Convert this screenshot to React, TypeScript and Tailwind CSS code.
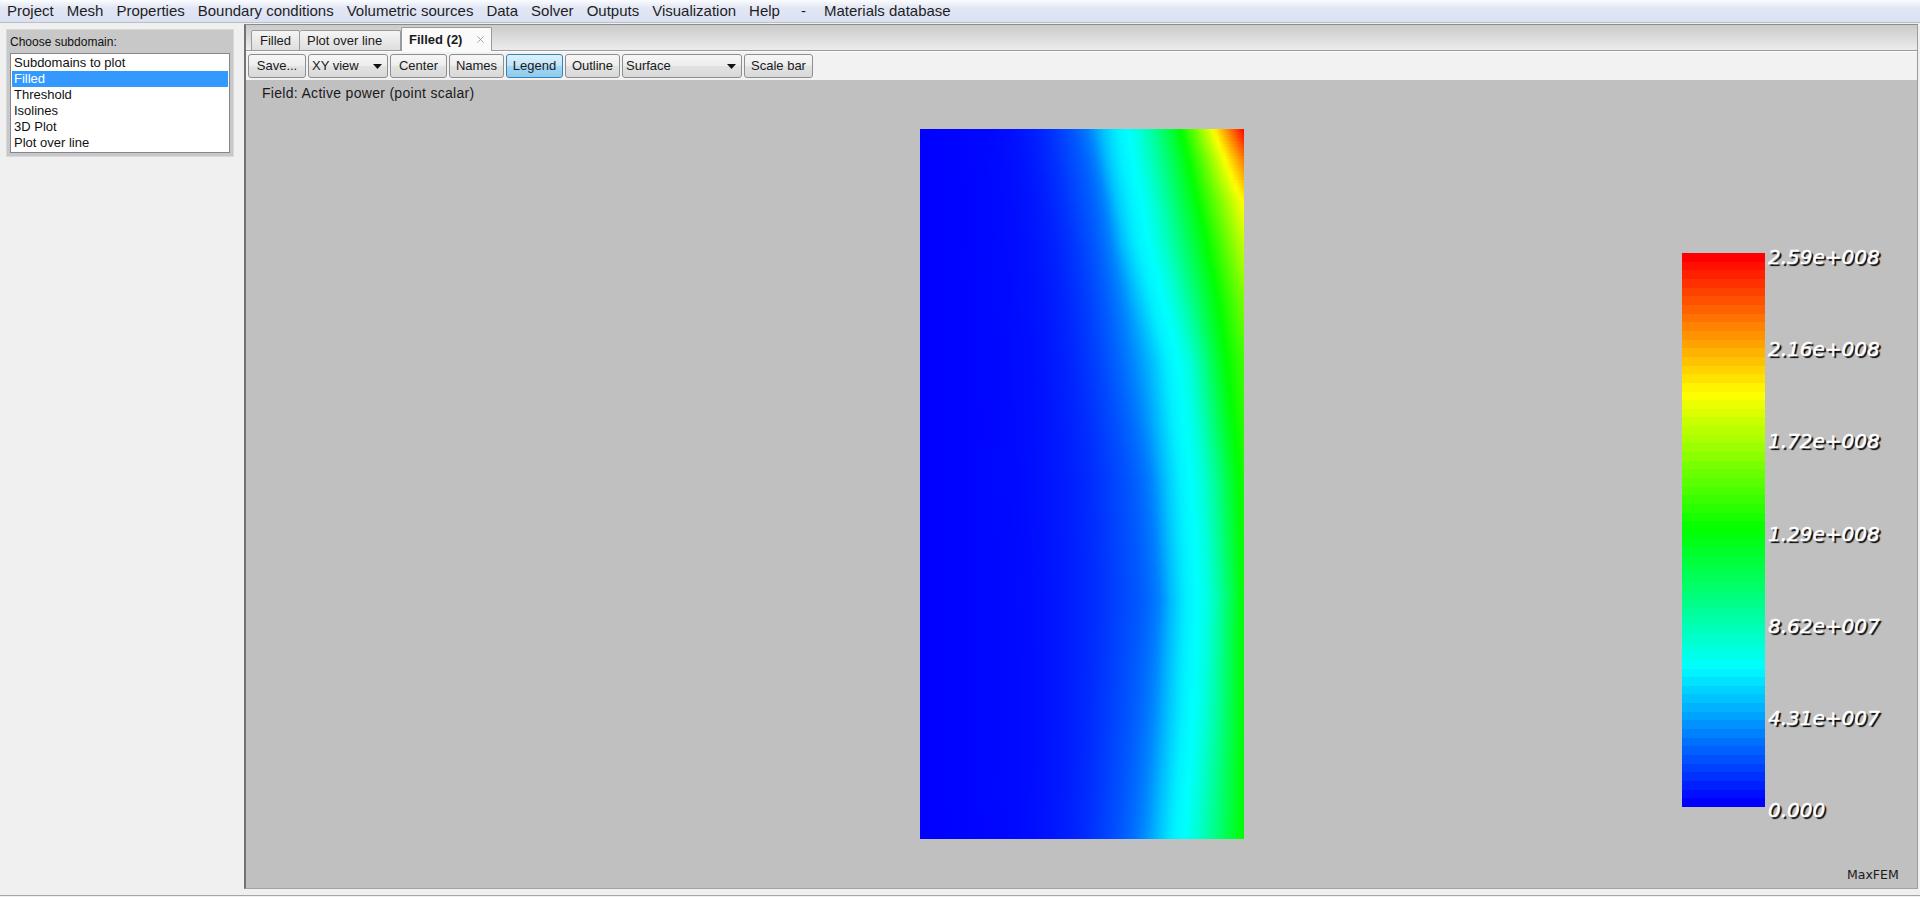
import React from 'react';
import { X } from 'lucide-react';

// field rows: y, b3 (f=.02), b2 (f=.0625), b (f=.125), c (f=.25), g (f=.5), edge value
const FIELD_TABLE: number[][] = [
  [129, 1020, 1060, 1088, 1127, 1180, 1.0],
  [160, 1025, 1065, 1095, 1132, 1188, 0.88],
  [200, 1030, 1072, 1103, 1140, 1197, 0.76],
  [245, 1035, 1080, 1110, 1148, 1207, 0.69],
  [300, 1040, 1088, 1120, 1162, 1218, 0.62],
  [360, 1045, 1095, 1130, 1177, 1227, 0.56],
  [480, 1050, 1110, 1150, 1190, 1240, 0.52],
  [600, 1052, 1115, 1158, 1197, 1243, 0.51],
  [720, 1052, 1110, 1150, 1192, 1244, 0.5],
  [840, 1050, 1103, 1140, 1183, 1244, 0.5],
];

const FX0 = 920;
const FW = 324;
const FH = 710;
const ROW_H = 3;

const rgb = (r: number, g: number, b: number) => `rgb(${Math.round(r)},${Math.round(g)},${Math.round(b)})`;

// rainbow lut, blue -> red
const cmap = (v: number) => {
  const f = Math.max(0, Math.min(1, v));
  if (f < 0.25) return rgb(0, (f / 0.25) * 255, 255);
  if (f < 0.5) return rgb(0, 255, ((0.5 - f) / 0.25) * 255);
  if (f < 0.75) return rgb(((f - 0.5) / 0.25) * 255, 255, 0);
  return rgb(255, ((1 - f) / 0.25) * 255, 0);
};

const interpRow = (y: number) => {
  if (y <= FIELD_TABLE[0][0]) return FIELD_TABLE[0];
  for (let i = 0; i < FIELD_TABLE.length - 1; i++) {
    const a = FIELD_TABLE[i];
    const b = FIELD_TABLE[i + 1];
    if (y >= a[0] && y <= b[0]) {
      const t = (y - a[0]) / (b[0] - a[0]);
      return a.map((v, k) => v + (b[k] - v) * t);
    }
  }
  return FIELD_TABLE[FIELD_TABLE.length - 1];
};

// monotone cubic (Fritsch-Carlson) through the knots, so bands blend smoothly
const monotone = (xs: number[], ys: number[]) => {
  const n = xs.length;
  const d: number[] = [];
  for (let i = 0; i < n - 1; i++) d.push((ys[i + 1] - ys[i]) / (xs[i + 1] - xs[i]));
  const m: number[] = [d[0]];
  for (let i = 1; i < n - 1; i++) m.push(d[i - 1] * d[i] <= 0 ? 0 : (d[i - 1] + d[i]) / 2);
  m.push(d[n - 2]);
  for (let i = 0; i < n - 1; i++) {
    if (d[i] === 0) {
      m[i] = 0;
      m[i + 1] = 0;
      continue;
    }
    const a = m[i] / d[i];
    const b = m[i + 1] / d[i];
    const s = a * a + b * b;
    if (s > 9) {
      const t = 3 / Math.sqrt(s);
      m[i] = t * a * d[i];
      m[i + 1] = t * b * d[i];
    }
  }
  return (x: number) => {
    let i = 0;
    while (i < n - 2 && x > xs[i + 1]) i++;
    const h = xs[i + 1] - xs[i];
    const t = Math.max(0, Math.min(1, (x - xs[i]) / h));
    const t2 = t * t;
    const t3 = t2 * t;
    return (
      (2 * t3 - 3 * t2 + 1) * ys[i] +
      (t3 - 2 * t2 + t) * h * m[i] +
      (-2 * t3 + 3 * t2) * ys[i + 1] +
      (t3 - t2) * h * m[i + 1]
    );
  };
};

const rowStops = (y: number) => {
  const [, b3, b2, b, c, g, e] = interpRow(y);
  const xr = FX0 + FW;
  // flat shoulder around cyan, as in the solver output
  const xs = [FX0, b3, b2, b, c - 24, c - 10, c, c + 13];
  const fs = [0, 0.02, 0.0625, 0.125, 0.19, 0.235, 0.25, 0.29];
  if (g < xr - 1) {
    xs.push(g, xr);
    fs.push(0.5, e);
  } else {
    xs.push(xr);
    fs.push(0.25 + (0.25 * (xr - c)) / (g - c));
  }
  const f = monotone(xs, fs);
  const stops: { o: number; c: string }[] = [{ o: 0, c: cmap(0) }];
  for (let x = b3 - 40; x < xr; x += 4) {
    if (x <= FX0) continue;
    stops.push({ o: (x - FX0) / FW, c: cmap(f(x)) });
  }
  stops.push({ o: 1, c: cmap(f(xr)) });
  return stops;
};

const fieldRows = Array.from({ length: Math.ceil(FH / ROW_H) }, (_, i) => rowStops(129 + i * ROW_H + ROW_H / 2));

const BANDS = 64;
const BAR_H = 554;
const legendValues = ['2.59e+008', '2.16e+008', '1.72e+008', '1.29e+008', '8.62e+007', '4.31e+007', '0.000'];

const menuItems = ['Project', 'Mesh', 'Properties', 'Boundary conditions', 'Volumetric sources', 'Data', 'Solver', 'Outputs', 'Visualization', 'Help'];
const subdomains = ['Subdomains to plot', 'Filled', 'Threshold', 'Isolines', '3D Plot', 'Plot over line'];

const btnBase =
  'h-[24px] rounded-[3px] border text-[13px] text-[#1a1a1a] flex items-center shrink-0';
const btnNormal =
  'border-[#8e8e8e] bg-[linear-gradient(to_bottom,#f7f7f7_0%,#ededed_48%,#e2e2e2_52%,#d9d9d9_100%)]';
const btnPressed =
  'border-[#3c7fb1] bg-[linear-gradient(to_bottom,#dcf0fb_0%,#c2e4f7_48%,#a6d7f3_52%,#8ccbee_100%)]';

const Arrow = () => (
  <svg width="9" height="5" viewBox="0 0 9 5" className="shrink-0">
    <path d="M0 0 H9 L4.5 5 Z" fill="#111" />
  </svg>
);

const App: React.FC = () => {
  return (
    <div className="w-[1920px] h-[897px] overflow-hidden bg-[#f0f0f0] flex flex-col font-['Liberation_Sans',Arial,sans-serif]">
      {/* menu bar */}
      <div className="h-[23px] shrink-0 border-b border-[#b9bec8] bg-[linear-gradient(to_bottom,#fbfcfe_0%,#e2e7f5_35%,#dbe1f2_100%)] flex items-center pl-[7px] gap-[13px] text-[15px] text-[#1e1e1e]">
        {menuItems.map(item => (
          <span key={item} className="whitespace-nowrap leading-[18px]">{item}</span>
        ))}
        <span className="ml-[8px] mr-[5px] leading-[18px]">-</span>
        <span className="whitespace-nowrap leading-[18px]">Materials database</span>
      </div>

      <div className="h-[866px] shrink-0 flex">
        {/* left panel */}
        <div className="w-[244px] shrink-0 pt-[6px] pl-[6px]">
          <div className="w-[228px] h-[128px] bg-[#c8c8c8] border border-[#d8d8d8] flex flex-col">
            <div className="h-[23px] pt-[5px] pl-[3px] text-[12px] leading-[14px] text-[#111]">Choose subdomain:</div>
            <div className="mx-[3px] h-[100px] bg-white border border-[#828790] p-[1px] text-[13px] text-[#111]">
              {subdomains.map(s => (
                <div
                  key={s}
                  className={`h-[16px] leading-[16px] pl-[2px] whitespace-nowrap ${s === 'Filled' ? 'bg-[#3399ff] text-white' : ''}`}
                >
                  {s}
                </div>
              ))}
            </div>
          </div>
        </div>

        {/* plot frame */}
        <div className="mt-[1px] mr-[2px] h-[865px] flex-1 flex flex-col border-t border-t-[#8c8c8c] border-l-2 border-l-[#727272] border-r border-r-[#9c9c9c] border-b border-b-[#a2a2a2]">
          {/* tabs */}
          <div className="h-[26px] shrink-0 border-b border-[#9c9c9c] bg-[linear-gradient(to_bottom,#cbcbcb,#ececec)] flex items-end pl-[5px] text-[13px] text-[#1a1a1a]">
            <div className="w-[49px] h-[21px] -mb-px border border-[#9a9a9a] rounded-t-[2px] bg-[linear-gradient(to_bottom,#f5f5f5,#dedede)] flex items-center pl-[8px]">
              Filled
            </div>
            <div className="w-[101px] h-[21px] -mb-px border border-l-0 border-[#9a9a9a] rounded-t-[2px] bg-[linear-gradient(to_bottom,#f5f5f5,#dedede)] flex items-center pl-[7px]">
              Plot over line
            </div>
            <div className="w-[91px] h-[24px] -mb-px border border-b-0 border-[#9a9a9a] rounded-t-[2px] bg-[#fafafa] flex items-center pl-[7px] font-bold">
              Filled (2)
              <X size={11} strokeWidth={1.6} className="ml-auto mr-[5px] text-[#8a8a8a]" />
            </div>
          </div>

          {/* toolbar */}
          <div className="h-[29px] shrink-0 border-t border-[#fdfdfd] bg-[#f2f2f2] pt-[2px] pl-[2px] flex gap-[2px]">
            <div className={`${btnBase} ${btnNormal} w-[58px] justify-center`}>Save...</div>
            <div className={`${btnBase} ${btnNormal} w-[80px] pl-[3px] pr-[5px]`}>
              <span>XY view</span>
              <span className="ml-auto"><Arrow /></span>
            </div>
            <div className={`${btnBase} ${btnNormal} w-[57px] justify-center`}>Center</div>
            <div className={`${btnBase} ${btnNormal} w-[55px] justify-center`}>Names</div>
            <div className={`${btnBase} ${btnPressed} w-[57px] justify-center`}>Legend</div>
            <div className={`${btnBase} ${btnNormal} w-[55px] justify-center`}>Outline</div>
            <div className={`${btnBase} ${btnNormal} w-[120px] pl-[3px] pr-[5px]`}>
              <span>Surface</span>
              <span className="ml-auto"><Arrow /></span>
            </div>
            <div className={`${btnBase} ${btnNormal} w-[69px] justify-center`}>Scale bar</div>
          </div>

          {/* render window */}
          <div className="relative flex-1 bg-[#c0c0c0] overflow-hidden">
            <div className="absolute left-[16px] top-[5px] text-[14px] leading-[16px] tracking-[0.3px] text-[#1a1a1a] whitespace-nowrap">
              Field: Active power (point scalar)
            </div>

            <svg width={FW} height={FH} className="absolute left-[674px] top-[49px]" shapeRendering="crispEdges">
              <defs>
                {fieldRows.map((stops, i) => (
                  <linearGradient key={i} id={`fr${i}`} x1="0" x2="1" y1="0" y2="0">
                    {stops.map((s, j) => (
                      <stop key={j} offset={s.o} stopColor={s.c} />
                    ))}
                  </linearGradient>
                ))}
              </defs>
              {fieldRows.map((_, i) => (
                <rect
                  key={i}
                  x={0}
                  y={i * ROW_H}
                  width={FW}
                  height={Math.min(ROW_H + 0.5, FH - i * ROW_H)}
                  fill={`url(#fr${i})`}
                />
              ))}
            </svg>

            <svg width={83} height={BAR_H} className="absolute left-[1436px] top-[173px]" shapeRendering="crispEdges">
              {Array.from({ length: BANDS }, (_, i) => (
                <rect
                  key={i}
                  x={0}
                  y={(i * BAR_H) / BANDS}
                  width={83}
                  height={BAR_H / BANDS + 0.6}
                  fill={cmap(1 - i / (BANDS - 1))}
                />
              ))}
            </svg>

            {legendValues.map((v, i) => (
              <div
                key={v}
                className="absolute left-[1522px] h-[24px] leading-[24px] text-[20px] italic text-white whitespace-nowrap font-['DejaVu_Sans',sans-serif] [text-shadow:2px_2px_1px_#000] [-webkit-text-stroke:0.4px_#ffffff]"
                style={{ top: 177 + i * 92.17 - 12 }}
              >
                {v}
              </div>
            ))}

            <div className="absolute left-[1601px] top-[787px] text-[12.5px] leading-[16px] text-[#1a1a1a] font-['DejaVu_Sans',sans-serif]">
              MaxFEM
            </div>
          </div>
        </div>
      </div>

      <div className="h-[8px] shrink-0 pt-[6px]">
        <div className="border-t border-[#a6a6a6]" />
      </div>
    </div>
  );
};

export default App;
